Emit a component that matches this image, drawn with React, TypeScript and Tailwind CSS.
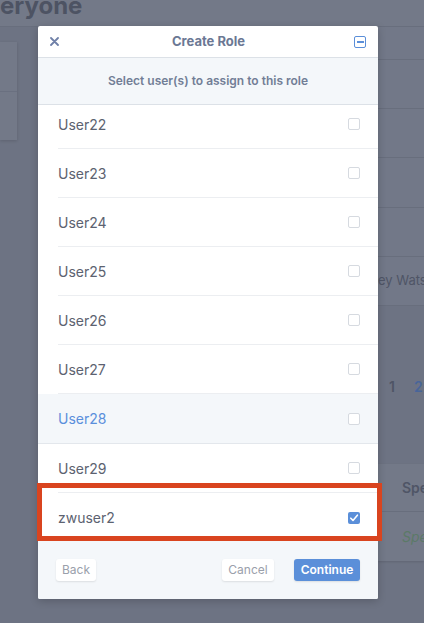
import React from "react";

const users = ["User22", "User23", "User24", "User25", "User26", "User27", "User28", "User29"];

function Box({ checked }: { checked?: boolean }) {
  if (checked) {
    return (
      <div className="w-[12px] h-[12px] rounded-[2px] bg-[#5b8fd9] flex items-center justify-center">
        <svg width="10" height="10" viewBox="0 0 10 10">
          <path d="M1.8 5.2 L4 7.4 L8.4 2.2" fill="none" stroke="#ffffff" strokeWidth="1.6" strokeLinecap="round" strokeLinejoin="round" />
        </svg>
      </div>
    );
  }
  return <div className="w-[12px] h-[12px] rounded-[2px] border border-[#d6dae0] bg-white" />;
}

export default function App() {
  return (
    <div className="relative w-[424px] h-[623px] overflow-hidden bg-[#6d7383] font-['Inter','Noto_Sans',sans-serif]">
      {/* background page (dimmed) */}
      <div className="h-[27px] bg-[#737988] border-b border-[#686e7d] overflow-hidden">
        <div className="-mt-[9px] text-[24px] font-bold text-[#4d5363] leading-[30px]">eryone</div>
      </div>
      <div className="flex">
        <div className="mt-[15px] w-[17px] h-[98px] bg-[#737988] shadow-[0_1px_3px_rgba(0,0,0,0.15)] flex flex-col">
          <div className="h-[50px] border-b border-[#6a7080]" />
        </div>
        <div className="flex-1" />
        <div className="w-[46px] flex flex-col">
          <div className="bg-[#727888]">
            <div className="h-[33px] border-b border-[#686e7d]" />
            <div className="h-[49px] border-b border-[#686e7d]" />
            <div className="h-[49px] border-b border-[#686e7d]" />
            <div className="h-[50px] border-b border-[#686e7d]" />
            <div className="h-[49px] border-b border-[#686e7d]" />
            <div className="h-[49px] border-b border-[#686e7d] flex items-center whitespace-nowrap text-[13px] text-[#4f5566]">ey Watson</div>
          </div>
          <div className="h-[158px] flex items-center pt-[2px] text-[14px] font-semibold whitespace-nowrap">
            <span className="ml-[11px] text-[#4f5566]">1</span>
            <span className="ml-[19px] text-[#48659a]">2</span>
          </div>
          <div className="bg-[#737988] shadow-[0_1px_2px_rgba(0,0,0,0.12)]">
            <div className="h-[48px] border-b border-[#686e7d] flex items-center pl-[24px] text-[14px] font-semibold text-[#4f5566] whitespace-nowrap">Speaker</div>
            <div className="h-[49px] flex items-center pl-[24px] text-[14px] italic text-[#5b7a67] whitespace-nowrap">Speaker</div>
          </div>
        </div>
      </div>

      {/* modal */}
      <div className="absolute left-[38px] top-[26px] w-[340px] h-[573px] bg-white rounded-[2px] shadow-[0_2px_8px_rgba(0,0,0,0.2)] flex flex-col overflow-hidden">
        <div className="h-[32px] flex items-center justify-between px-[12px] border-b border-[#dce1e7] shrink-0">
          <svg width="9" height="9" viewBox="0 0 9 9">
            <path d="M1 1 L8 8 M8 1 L1 8" stroke="#6f80a8" strokeWidth="1.8" strokeLinecap="round" />
          </svg>
          <div className="text-[13px] font-bold text-[#6b7894] pl-[4px]">Create Role</div>
          <div className="w-[12px] h-[12px] rounded-[2px] border-[1.5px] border-[#5b8fd9] flex items-center justify-center">
            <div className="w-[7px] h-[2px] bg-[#5b8fd9]" />
          </div>
        </div>
        <div className="h-[47px] shrink-0 bg-[#f4f7fa] border-b border-[#dce1e7] flex items-center justify-center text-[12px] font-semibold text-[#727e96]">
          Select user(s) to assign to this role
        </div>
        <div className="h-[435px] shrink-0 overflow-hidden">
          <div className="-mt-[5px]">
            {users.map((u) => {
              const hi = u === "User28";
              return (
                <div key={u} className={hi ? "bg-[#f4f7fa] border-b border-[#e3e7ec]" : "pl-[20px]"}>
                  <div className={"h-[49px] flex items-center justify-between pr-[18px] " + (hi ? "pl-[20px]" : "border-b border-[#eceef1]")}>
                    <span className={"text-[14px] " + (hi ? "text-[#5a8fdc]" : "text-[#5c6270]")}>{u}</span>
                    <Box />
                  </div>
                </div>
              );
            })}
            <div className="h-[49px] flex items-center justify-between pl-[20px] pr-[18px]">
              <span className="text-[14px] text-[#5c6270]">zwuser2</span>
              <Box checked />
            </div>
          </div>
        </div>
        <div className="flex-1 bg-[#f4f7fa] flex items-start justify-between px-[18px] pt-[19px]">
          <button className="h-[22px] w-[40px] rounded-[3px] bg-white shadow-[0_1px_2px_rgba(0,0,0,0.1)] text-[12px] text-[#9aa0ab]">Back</button>
          <div className="flex gap-[20px]">
            <button className="h-[22px] w-[52px] rounded-[3px] bg-white shadow-[0_1px_2px_rgba(0,0,0,0.1)] text-[12px] text-[#9aa0ab]">Cancel</button>
            <button className="h-[22px] w-[66px] rounded-[3px] bg-[#5b8fd9] shadow-[0_1px_2px_rgba(0,0,0,0.1)] text-[12px] font-semibold text-white">Continue</button>
          </div>
        </div>
      </div>

      {/* annotation highlight */}
      <div className="absolute left-[37px] top-[483px] w-[345px] h-[58px] border-[5px] border-[#d9441f]" />
    </div>
  );
}
